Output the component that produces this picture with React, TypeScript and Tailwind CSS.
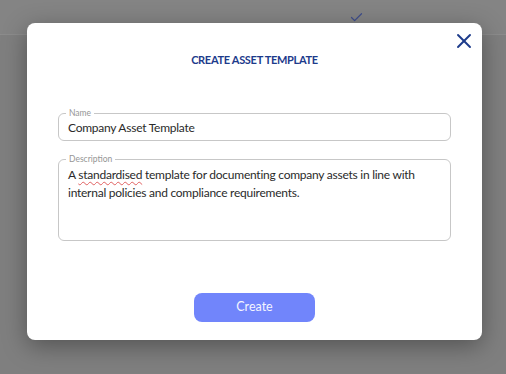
import React from 'react';
import { X, Check } from 'lucide-react';

const font = { fontFamily: 'Lato, "Open Sans", sans-serif' };

const Field: React.FC<{ label: string; className?: string; children: React.ReactNode }> = ({
  label,
  className = '',
  children,
}) => (
  <fieldset className={`rounded-md border border-[#c7c7c7] px-[9px] ${className}`}>
    <legend className="ml-[-2px] px-[3px] text-[8.5px] leading-[10px] text-[#969696]">{label}</legend>
    {children}
  </fieldset>
);

export default function App() {
  return (
    <div className="relative h-[374px] w-[506px] overflow-hidden bg-[#7f7f7f]" style={font}>
      {/* page behind the overlay */}
      <div className="flex h-[35px] items-center border-b border-[#8c8c8c] bg-[#848484]">
        <Check className="ml-[349px] h-[15px] w-[15px] text-[#3f4e8c]" strokeWidth={2} />
      </div>

      {/* Modal */}
      <div className="absolute left-[27px] top-[23px] flex h-[317px] w-[455px] flex-col rounded-lg bg-white px-[31px] shadow-[0_6px_24px_rgba(0,0,0,0.35)]">
        <button className="absolute right-[6px] top-[6px] text-[#1d3b8b]" aria-label="Cerrar">
          <X className="h-[24px] w-[24px]" strokeWidth={1.9} />
        </button>

        <h2 className="mt-[30px] text-center text-[11px] font-bold leading-[14px] tracking-[-0.3px] text-[#1d3b8b]">
          CREATE ASSET TEMPLATE
        </h2>

        <Field label="Name" className="mt-[41px] h-[33px]">
          <div className="pt-[1px] text-[12px] leading-[17px] tracking-[-0.25px] text-[#2a2a2a]">
            Company Asset Template
          </div>
        </Field>

        <Field label="Description" className="mt-[13px] h-[87px]">
          <div className="pt-[2px] text-[12px] leading-[17.5px] tracking-[-0.25px] text-[#2a2a2a]">
            A{' '}
            <span className="underline decoration-[#e06060] decoration-wavy decoration-1 underline-offset-2">
              standardised
            </span>{' '}
            template for documenting company assets in line with internal policies and compliance requirements.
          </div>
        </Field>

        <div className="mt-auto mb-[18px] flex justify-center">
          <button className="h-[29px] w-[121px] rounded-lg bg-[#7185fb] text-[12.5px] text-[#f4f5ff]">
            Create
          </button>
        </div>
      </div>
    </div>
  );
}
